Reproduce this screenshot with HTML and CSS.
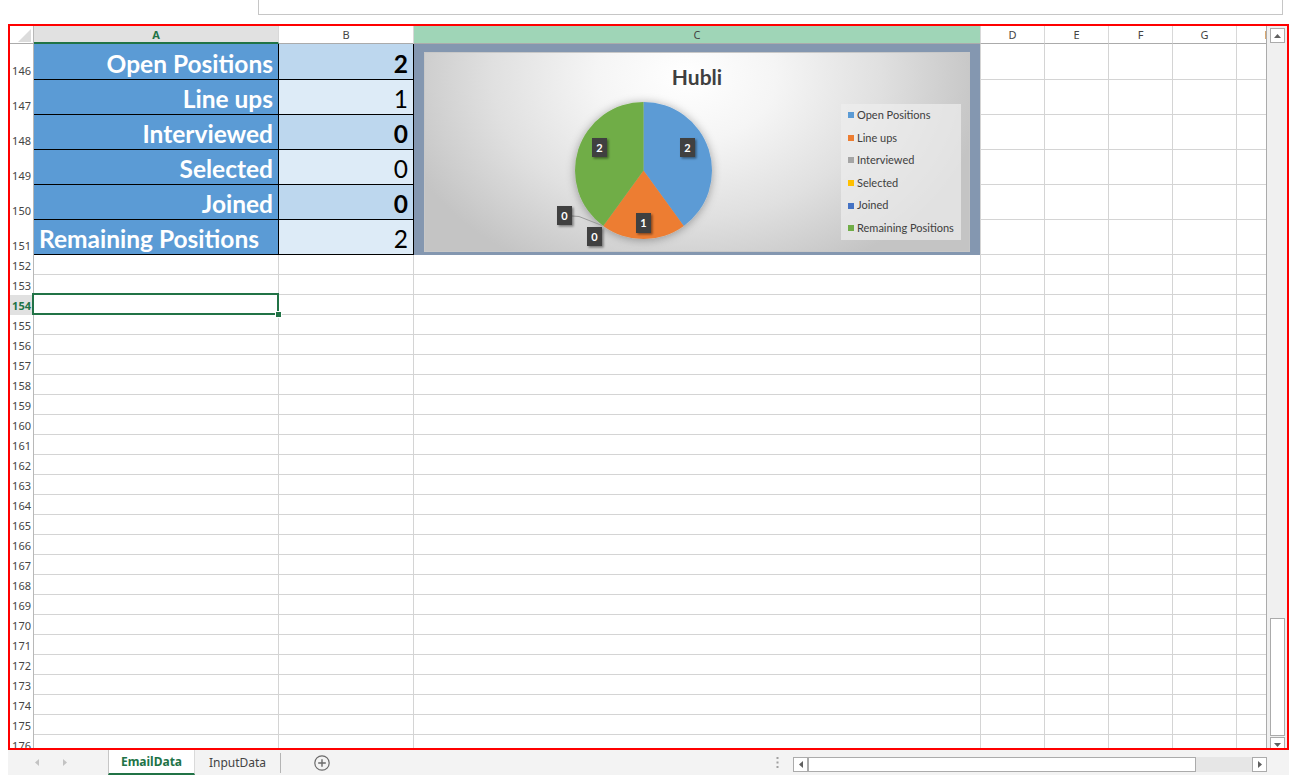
FILE: index.html
```html
<!DOCTYPE html>
<html>
<head>
<meta charset="utf-8">
<title>EmailData</title>
<link rel="stylesheet" href="styles.css">
</head>
<body>
<div class="topbar"><div class="formula"></div></div>
<div class="frame">
  <div class="sheet">
    <div class="grid">
      <div class="chartcell">
        <div class="chart">
          <div class="chart-title">Hubli</div>
          <svg class="plot" width="544" height="198" viewBox="0 0 544 198">
            <defs>
              <filter id="pieshadow" x="-30%" y="-30%" width="160%" height="160%">
                <feDropShadow dx="0" dy="1" stdDeviation="5" flood-color="#000" flood-opacity="0.35"/>
              </filter>
              <filter id="labshadow" x="-50%" y="-50%" width="200%" height="200%">
                <feDropShadow dx="1.5" dy="1.5" stdDeviation="1" flood-color="#000" flood-opacity="0.45"/>
              </filter>
            </defs>
            <g filter="url(#pieshadow)">
              <path d="M218.5 117.5 L218.5 49 A68.5 68.5 0 0 1 258.76 172.92 Z" fill="#5b9bd5"/>
              <path d="M218.5 117.5 L258.76 172.92 A68.5 68.5 0 0 1 178.24 172.92 Z" fill="#ed7d31"/>
              <path d="M218.5 117.5 L178.24 172.92 A68.5 68.5 0 0 1 218.5 49 Z" fill="#70ad47"/>
            </g>
            <polyline points="147,163 154,163.5 177,172.5" fill="none" stroke="#9a9a9a" stroke-width="1"/>
            <g filter="url(#labshadow)" fill="#404040">
              <rect x="255" y="85" width="15" height="19"/>
              <rect x="167" y="85" width="15" height="19"/>
              <rect x="211" y="160" width="15" height="20"/>
              <rect x="132" y="153" width="15" height="19"/>
              <rect x="162" y="174" width="15" height="19"/>
            </g>
            <g fill="#ffffff" font-family="Lato, sans-serif" font-weight="700" font-size="11" text-anchor="middle">
              <text x="262.5" y="98.5">2</text>
              <text x="174.5" y="98.5">2</text>
              <text x="218.5" y="174">1</text>
              <text x="139.5" y="166.5">0</text>
              <text x="169.5" y="187.5">0</text>
            </g>
          </svg>
          <div class="legend">
            <div class="li"><span class="sw s1"></span>Open Positions</div>
            <div class="li"><span class="sw s2"></span>Line ups</div>
            <div class="li"><span class="sw s3"></span>Interviewed</div>
            <div class="li"><span class="sw s4"></span>Selected</div>
            <div class="li"><span class="sw s5"></span>Joined</div>
            <div class="li"><span class="sw s6"></span>Remaining Positions</div>
          </div>
        </div>
      </div>

      <div class="corner"><svg width="13" height="13" viewBox="0 0 13 13"><polygon points="13,0 13,13 0,13" fill="#dcdcdc"/></svg></div>
      <div class="ch sel">A</div><div class="ch">B</div><div class="ch hl">C</div><div class="ch">D</div><div class="ch">E</div><div class="ch">F</div><div class="ch">G</div><div class="ch">H</div>

      <div class="rh">146</div><div class="lab">Open Positions</div><div class="val dark b">2</div><div class="c"></div><div class="c"></div><div class="c"></div><div class="c"></div><div class="c"></div>
      <div class="rh">147</div><div class="lab">Line ups</div><div class="val light">1</div><div class="c"></div><div class="c"></div><div class="c"></div><div class="c"></div><div class="c"></div>
      <div class="rh">148</div><div class="lab">Interviewed</div><div class="val dark b">0</div><div class="c"></div><div class="c"></div><div class="c"></div><div class="c"></div><div class="c"></div>
      <div class="rh">149</div><div class="lab">Selected</div><div class="val light">0</div><div class="c"></div><div class="c"></div><div class="c"></div><div class="c"></div><div class="c"></div>
      <div class="rh">150</div><div class="lab">Joined</div><div class="val dark b">0</div><div class="c"></div><div class="c"></div><div class="c"></div><div class="c"></div><div class="c"></div>
      <div class="rh">151</div><div class="lab left">Remaining Positions</div><div class="val light">2</div><div class="c"></div><div class="c"></div><div class="c"></div><div class="c"></div><div class="c"></div>

      <div class="rh">152</div><div class="c"></div><div class="c"></div><div class="c"></div><div class="c"></div><div class="c"></div><div class="c"></div><div class="c"></div><div class="c"></div>
      <div class="rh">153</div><div class="c"></div><div class="c"></div><div class="c"></div><div class="c"></div><div class="c"></div><div class="c"></div><div class="c"></div><div class="c"></div>
      <div class="rh sel">154</div><div class="c cur"><div class="cursor"></div><div class="handle"></div></div><div class="c"></div><div class="c"></div><div class="c"></div><div class="c"></div><div class="c"></div><div class="c"></div><div class="c"></div>
      <div class="rh">155</div><div class="c"></div><div class="c"></div><div class="c"></div><div class="c"></div><div class="c"></div><div class="c"></div><div class="c"></div><div class="c"></div>
      <div class="rh">156</div><div class="c"></div><div class="c"></div><div class="c"></div><div class="c"></div><div class="c"></div><div class="c"></div><div class="c"></div><div class="c"></div>
      <div class="rh">157</div><div class="c"></div><div class="c"></div><div class="c"></div><div class="c"></div><div class="c"></div><div class="c"></div><div class="c"></div><div class="c"></div>
      <div class="rh">158</div><div class="c"></div><div class="c"></div><div class="c"></div><div class="c"></div><div class="c"></div><div class="c"></div><div class="c"></div><div class="c"></div>
      <div class="rh">159</div><div class="c"></div><div class="c"></div><div class="c"></div><div class="c"></div><div class="c"></div><div class="c"></div><div class="c"></div><div class="c"></div>
      <div class="rh">160</div><div class="c"></div><div class="c"></div><div class="c"></div><div class="c"></div><div class="c"></div><div class="c"></div><div class="c"></div><div class="c"></div>
      <div class="rh">161</div><div class="c"></div><div class="c"></div><div class="c"></div><div class="c"></div><div class="c"></div><div class="c"></div><div class="c"></div><div class="c"></div>
      <div class="rh">162</div><div class="c"></div><div class="c"></div><div class="c"></div><div class="c"></div><div class="c"></div><div class="c"></div><div class="c"></div><div class="c"></div>
      <div class="rh">163</div><div class="c"></div><div class="c"></div><div class="c"></div><div class="c"></div><div class="c"></div><div class="c"></div><div class="c"></div><div class="c"></div>
      <div class="rh">164</div><div class="c"></div><div class="c"></div><div class="c"></div><div class="c"></div><div class="c"></div><div class="c"></div><div class="c"></div><div class="c"></div>
      <div class="rh">165</div><div class="c"></div><div class="c"></div><div class="c"></div><div class="c"></div><div class="c"></div><div class="c"></div><div class="c"></div><div class="c"></div>
      <div class="rh">166</div><div class="c"></div><div class="c"></div><div class="c"></div><div class="c"></div><div class="c"></div><div class="c"></div><div class="c"></div><div class="c"></div>
      <div class="rh">167</div><div class="c"></div><div class="c"></div><div class="c"></div><div class="c"></div><div class="c"></div><div class="c"></div><div class="c"></div><div class="c"></div>
      <div class="rh">168</div><div class="c"></div><div class="c"></div><div class="c"></div><div class="c"></div><div class="c"></div><div class="c"></div><div class="c"></div><div class="c"></div>
      <div class="rh">169</div><div class="c"></div><div class="c"></div><div class="c"></div><div class="c"></div><div class="c"></div><div class="c"></div><div class="c"></div><div class="c"></div>
      <div class="rh">170</div><div class="c"></div><div class="c"></div><div class="c"></div><div class="c"></div><div class="c"></div><div class="c"></div><div class="c"></div><div class="c"></div>
      <div class="rh">171</div><div class="c"></div><div class="c"></div><div class="c"></div><div class="c"></div><div class="c"></div><div class="c"></div><div class="c"></div><div class="c"></div>
      <div class="rh">172</div><div class="c"></div><div class="c"></div><div class="c"></div><div class="c"></div><div class="c"></div><div class="c"></div><div class="c"></div><div class="c"></div>
      <div class="rh">173</div><div class="c"></div><div class="c"></div><div class="c"></div><div class="c"></div><div class="c"></div><div class="c"></div><div class="c"></div><div class="c"></div>
      <div class="rh">174</div><div class="c"></div><div class="c"></div><div class="c"></div><div class="c"></div><div class="c"></div><div class="c"></div><div class="c"></div><div class="c"></div>
      <div class="rh">175</div><div class="c"></div><div class="c"></div><div class="c"></div><div class="c"></div><div class="c"></div><div class="c"></div><div class="c"></div><div class="c"></div>
      <div class="rh">176</div><div class="c"></div><div class="c"></div><div class="c"></div><div class="c"></div><div class="c"></div><div class="c"></div><div class="c"></div><div class="c"></div>
    </div>
  </div>
  <div class="vscroll">
    <div class="sbtn"><svg width="7" height="4" viewBox="0 0 7 4"><polygon points="0,4 3.5,0 7,4" fill="#606060"/></svg></div>
    <div class="vspace"></div>
    <div class="vthumb"></div>
    <div class="sbtn down"><svg width="7" height="4" viewBox="0 0 7 4"><polygon points="0,0 7,0 3.5,4" fill="#606060"/></svg></div>
  </div>
</div>
<div class="tabbar">
  <div class="nav">
    <svg width="4" height="7" viewBox="0 0 4 7"><polygon points="4,0 4,7 0,3.5" fill="#c3c3c3"/></svg>
    <svg width="4" height="7" viewBox="0 0 4 7"><polygon points="0,0 4,3.5 0,7" fill="#c3c3c3"/></svg>
  </div>
  <div class="tab active">EmailData</div>
  <div class="tab other">InputData</div>
  <div class="tsep"></div>
  <div class="addsheet"><svg width="16" height="16" viewBox="0 0 16 16"><circle cx="8" cy="8" r="7.2" fill="none" stroke="#6a6a6a" stroke-width="1.2"/><path d="M8 4.2V11.8M4.2 8H11.8" stroke="#6a6a6a" stroke-width="1.4"/></svg></div>
  <div class="spacer"></div>
  <div class="dots"><svg width="3" height="11" viewBox="0 0 3 11"><rect x="0.5" y="0" width="2" height="2" fill="#a0a0a0"/><rect x="0.5" y="4.5" width="2" height="2" fill="#a0a0a0"/><rect x="0.5" y="9" width="2" height="2" fill="#a0a0a0"/></svg></div>
  <div class="hscroll">
    <div class="sbtn"><svg width="4" height="7" viewBox="0 0 4 7"><polygon points="4,0 4,7 0,3.5" fill="#606060"/></svg></div>
    <div class="hthumb"></div>
    <div class="htrack"></div>
    <div class="sbtn"><svg width="4" height="7" viewBox="0 0 4 7"><polygon points="0,0 4,3.5 0,7" fill="#606060"/></svg></div>
  </div>
</div>
</body>
</html>
```

FILE: styles.css
```css
* { box-sizing: border-box; }
html, body { margin: 0; padding: 0; background: #ffffff; }
body {
  font-family: "Noto Sans", "DejaVu Sans", sans-serif;
  color: #444444;
  width: 1296px;
  height: 775px;
  overflow: hidden;
}

.topbar { height: 24px; }
.formula {
  margin-left: 258px;
  width: 1025px;
  height: 15px;
  border: 1px solid #c6c6c6;
  border-top: none;
}

.frame {
  margin-left: 8px;
  width: 1281px;
  height: 726px;
  border: 2px solid #ff0000;
  display: flex;
}

.sheet {
  width: 1257px;
  height: 722px;
  overflow: hidden;
  border-right: 1px solid #ababab;
}

.grid {
  display: grid;
  grid-template-columns: 24px 245px 135px 567px 64px 64px 64px 64px 64px;
  grid-template-rows: 18px 36px 35px 35px 35px 35px 35px;
  grid-auto-rows: 20px;
  width: 1291px;
}

/* headers */
.corner {
  border-right: 1px solid #b8b8b8;
  border-bottom: 1px solid #ababab;
  display: flex;
  justify-content: flex-end;
  align-items: flex-end;
  padding: 0 2px 1px 0;
}
.ch {
  border-right: 1px solid #d8d8d8;
  border-bottom: 1px solid #ababab;
  font-size: 11px;
  line-height: 17px;
  text-align: center;
  color: #444444;
  background: #ffffff;
}
.ch.sel {
  background: #e1e1e1;
  border-bottom: 2px solid #217346;
  color: #217346;
  font-weight: 700;
}
.ch.hl { background: #9fd5b7; }

.rh {
  border-right: 1px solid #b8b8b8;
  font-size: 11px;
  line-height: 19px;
  display: flex;
  align-items: flex-end;
  justify-content: flex-end;
  padding-right: 2px;
  color: #444444;
}
.rh.sel {
  background: #e1e1e1;
  color: #217346;
  font-weight: 700;
}

/* cells */
.c {
  border-right: 1px solid #d4d4d4;
  border-bottom: 1px solid #d4d4d4;
}
.lab {
  background: #5b9bd5;
  border-right: 1px solid #000000;
  border-bottom: 1px solid #000000;
  color: #ffffff;
  font: 700 24.5px/1.2 Lato, sans-serif;
  display: flex;
  align-items: flex-end;
  justify-content: flex-end;
  padding: 0 5px 1px 0;
  white-space: nowrap;
}
.lab.left {
  justify-content: flex-start;
  padding-left: 5px;
}
.val {
  border-right: 1px solid #000000;
  border-bottom: 1px solid #000000;
  color: #000000;
  font: 400 24.5px/1.2 Lato, sans-serif;
  display: flex;
  align-items: flex-end;
  justify-content: flex-end;
  padding: 0 5px 1px 0;
}
.val.dark { background: #bdd7ee; }
.val.light { background: #ddebf7; }
.val.b { font-weight: 700; }

.cur { position: relative; }
.cursor {
  position: absolute;
  left: -2px;
  top: -2px;
  right: -1px;
  bottom: -1px;
  border: 2px solid #217346;
}
.handle {
  position: absolute;
  right: -3px;
  bottom: -3px;
  width: 5px;
  height: 5px;
  background: #217346;
  outline: 1px solid #ffffff;
}

/* chart */
.chartcell {
  grid-column: 4;
  grid-row: 2 / span 6;
  background: #8497b0;
  padding: 8px 10px 3px 10px;
  border-right: 1px solid #d4d4d4;
}
.chart {
  position: relative;
  height: 100%;
  border: 1px solid #c8c8c8;
  background: radial-gradient(ellipse 55% 110% at 48% 12%, #ffffff 0%, #f5f5f5 30%, #e0e0e0 65%, #c4c4c4 100%);
}
.chart-title {
  text-align: center;
  padding-top: 12px;
  font: 700 21px/24px Lato, sans-serif;
  color: #404040;
}
.plot {
  position: absolute;
  left: 0;
  top: 0;
}
.legend {
  position: absolute;
  right: 8px;
  top: 51px;
  width: 120px;
  height: 136px;
  background: rgba(238, 238, 238, 0.7);
  padding-left: 7px;
  font: 400 11px/22.6px Lato, sans-serif;
  color: #404040;
}
.li {
  display: flex;
  align-items: center;
  gap: 3px;
  height: 22.6px;
  white-space: nowrap;
}
.sw { width: 6px; height: 6px; flex: none; }
.s1 { background: #5b9bd5; }
.s2 { background: #ed7d31; }
.s3 { background: #a5a5a5; }
.s4 { background: #ffc000; }
.s5 { background: #4472c4; }
.s6 { background: #70ad47; }

/* scrollbars */
.vscroll {
  width: 20px;
  height: 722px;
  background: #f0f0f0;
  display: flex;
  flex-direction: column;
  padding: 2px 2px 0 3px;
  overflow: hidden;
}
.vspace { flex: 1; }
.vthumb {
  height: 118px;
  flex: none;
  border: 1px solid #ababab;
  background: #ffffff;
  margin-bottom: 1px;
}
.sbtn {
  width: 15px;
  height: 15px;
  flex: none;
  border: 1px solid #ababab;
  background: #ffffff;
  display: flex;
  align-items: center;
  justify-content: center;
}
.sbtn.down { margin-bottom: -4px; }

/* sheet tabs */
.tabbar {
  margin-left: 8px;
  width: 1281px;
  height: 25px;
  background: #f3f3f3;
  display: flex;
  align-items: stretch;
  font-size: 12px;
  padding-right: 22px;
}
.nav {
  width: 100px;
  flex: none;
  display: flex;
  align-items: center;
  padding-left: 27px;
  gap: 24px;
}
.tab {
  flex: none;
  display: flex;
  align-items: center;
  justify-content: center;
}
.tab.active {
  width: 87px;
  background: #ffffff;
  border-left: 1px solid #c6c6c6;
  border-right: 1px solid #dadada;
  border-bottom: 2px solid #217346;
  color: #217346;
  font-weight: 700;
}
.tab.other {
  width: 85px;
  color: #444444;
}
.tsep {
  width: 1px;
  flex: none;
  background: #b4b4b4;
  margin: 3px 0 2px 0;
}
.addsheet {
  margin-left: 33px;
  display: flex;
  align-items: center;
}
.spacer { flex: 1; }
.dots {
  display: flex;
  align-items: center;
  margin-right: 14px;
}
.hscroll {
  width: 474px;
  flex: none;
  height: 15px;
  margin-top: 7px;
  display: flex;
  background: #e6e6e6;
}
.hthumb {
  width: 388px;
  flex: none;
  border: 1px solid #ababab;
  background: #ffffff;
}
.htrack { flex: 1; }
```
